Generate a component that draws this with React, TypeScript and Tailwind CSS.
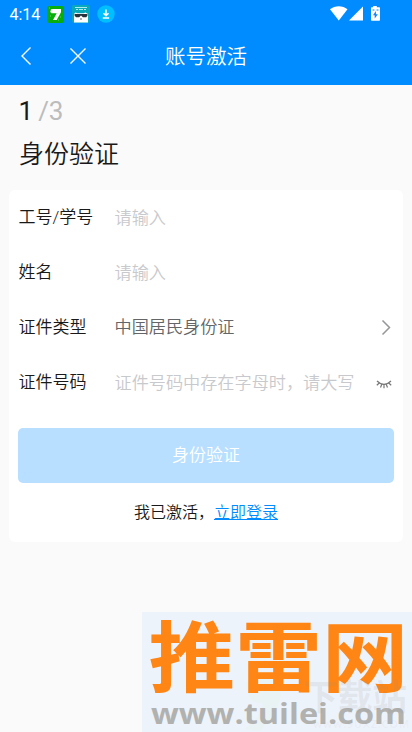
const fields = [
  { label: "工号/学号", value: "请输入", filled: false, icon: "" },
  { label: "姓名", value: "请输入", filled: false, icon: "" },
  { label: "证件类型", value: "中国居民身份证", filled: true, icon: "arrow" },
  { label: "证件号码", value: "证件号码中存在字母时，请大写", filled: false, icon: "eye" },
];

function StatusBar() {
  return (
    <div className="flex h-7 items-center pl-[9.5px] pr-[31px]">
      <span className="w-[37.5px] pt-px font-[Roboto] text-base font-[450] leading-7">4:14</span>
      <svg width="17" height="17" viewBox="0 0 17 17">
        <rect width="17" height="17" rx="2.5" fill="#08ae0b" />
        <path d="M4 3h10v3.2L9.7 14H6l3.7-6.7H4.5L3.3 6z" fill="#fff" />
        <path d="M2 2h1M13 11h1M3 10h1M11 14h1" stroke="#65d75e" />
      </svg>
      <svg className="ml-2" width="18" height="18" viewBox="0 0 18 18">
        <rect width="18" height="18" rx="2" fill="#0aa9ba" />
        <path d="M3 2.5h12M4 4.5h2m1 0h4m1 0h2" stroke="#a9edf1" />
        <path d="M2 17.5V9l1.5-1.5 2 .8h6l2-.8L16 9v8.5z" fill="#fff" />
        <path d="M2.5 9h13v1.5l-1.2 1.7h-3.4L9 10.5l-1.8 1.7H4l-1.5-1.8z" fill="#26333c" />
        <path d="M8 14h2" stroke="#59636b" />
      </svg>
      <svg className="ml-[7px]" width="18" height="18" viewBox="0 0 18 18">
        <circle cx="9" cy="9" r="8.7" fill="#00bfff" />
        <path d="M9 4.5v6M6.5 8.2 9 10.7l2.5-2.5M5.8 13h6.4" fill="none" stroke="#fff" strokeWidth="1.5" />
      </svg>
      <svg className="ml-auto" width="51" height="16" viewBox="0 0 51 16" fill="#fff">
        <path d="M0 3.2C5-.8 12.5-.8 17.5 3.2L8.8 14.5z" />
        <path d="M33 .5v14H19z" />
        <path d="M43.2 0h3.6v1.3h2.5q.7 0 .7.7v12q0 .8-.7.8h-7.6q-.7 0-.7-.8V2q0-.7.7-.7h1.5z" />
        <path d="M45.8 5l-2.8 4.2h1.7v3.4l3.2-4.4h-1.9zM42.5 3.5h2v1h-2zM46.5 3.5h2v1h-2z" fill="#1689f5" />
      </svg>
    </div>
  );
}

function NavBar() {
  return (
    <div className="relative flex h-[57px] items-center justify-center">
      <svg className="absolute left-5 top-[18px]" width="68" height="20" viewBox="0 0 68 20" fill="none" stroke="#fff" strokeWidth="1.4">
        <path d="M10.5 1.5 2 10l8.5 8.5M50.5 2.5l15 15M65.5 2.5l-15 15" />
      </svg>
      <h1 className="text-[20.5px] font-[350] leading-7">账号激活</h1>
    </div>
  );
}

function FieldIcon({ name }: { name: string }) {
  if (name === "arrow") {
    return (
      <svg width="11" height="16" viewBox="0 0 11 16" fill="none" stroke="#969799" strokeWidth="1.5">
        <path d="m1.5 .5 7 7-7 7" />
      </svg>
    );
  }
  return (
    <svg className="mt-1" width="16" height="10" viewBox="0 0 16 10" fill="none" stroke="#777" strokeWidth="1.2">
      <path d="M1 1q7 7 14 0M3 3.2.8 5.3M5.7 4.5 4.5 7.5M8 4.8v3.5M10.3 4.5l1.2 3M13 3.2l2.2 2.1" />
    </svg>
  );
}

function Watermark() {
  return (
    <div className="absolute left-[142px] top-[612px] h-[120px] w-[270px] overflow-hidden bg-[#edf3fb]">
      <svg className="absolute left-0 top-0" width="270" height="120" viewBox="0 0 270 120">
        <path d="M104 72q5-10 18-10 20 5 16 25-3 15-19 31-10 2-15-2 15-12 17-25-15 2-17-19z" fill="#e9f3f4" />
        <text transform="translate(6.5 74) scale(1 .92)" textLength="260" lengthAdjust="spacingAndGlyphs" fill="#ff8614" fontFamily="'Noto Sans CJK SC', sans-serif" fontSize="84" fontWeight="700">推雷网</text>
        <text transform="translate(9 112) scale(1 .9)" textLength="255" lengthAdjust="spacingAndGlyphs" fill="#b1b1af" fontFamily="'Open Sans', sans-serif" fontSize="32" fontWeight="700">www.tuilei.com</text>
        <text x="161" y="98" textLength="104" fill="#8d9292" fillOpacity="0.13" fontFamily="'Noto Sans CJK SC', sans-serif" fontSize="35" fontWeight="700">下载站</text>
        <text x="171" y="116" textLength="96" fill="#8d9292" fillOpacity="0.06" fontFamily="'Open Sans', sans-serif" fontSize="11" fontWeight="700">www.9UXZ.COM</text>
      </svg>
    </div>
  );
}

export default function App() {
  return (
    <div className="relative h-[732px] w-[412px] overflow-hidden bg-[#fafafa] font-[Roboto,'Noto_Sans_CJK_SC',sans-serif] text-[#191919]">
      <header className="bg-[#008cff] text-white">
        <StatusBar />
        <NavBar />
      </header>

      <main className="px-[9px] pt-2">
        <div className="flex h-9 items-center gap-[5px] pl-[9.5px] text-[26px] leading-[34px]">
          <span>1</span>
          <span className="text-[#bcbcbc]">/3</span>
        </div>
        <h2 className="mt-[7px] pl-[10px] text-[25px] font-[350] leading-[38px]">身份验证</h2>

        <section className="mt-4 h-[352px] rounded-md bg-white px-[9px] font-[350]">
          {fields.map((f) => (
            <div key={f.label} className="flex h-[55px] items-center pr-0.5 text-[17px]">
              <span className="w-[96.5px] shrink-0 pl-[0.5px]">{f.label}</span>
              <span className={`flex-1 whitespace-nowrap text-[17.15px] ${f.filled ? "text-[#646566]" : "pt-0.5 text-[#c8c9cc]"}`}>{f.value}</span>
              {f.icon && <FieldIcon name={f.icon} />}
            </div>
          ))}
          <button className="mt-[18px] h-[55px] w-full rounded-[5px] bg-[#b8dfff] text-[17px] text-white">身份验证</button>
          <p className="mt-[18px] text-center text-base leading-6">
            我已激活，<a className="text-[#008cff] underline" href="#">立即登录</a>
          </p>
        </section>
      </main>

      <Watermark />
    </div>
  );
}
